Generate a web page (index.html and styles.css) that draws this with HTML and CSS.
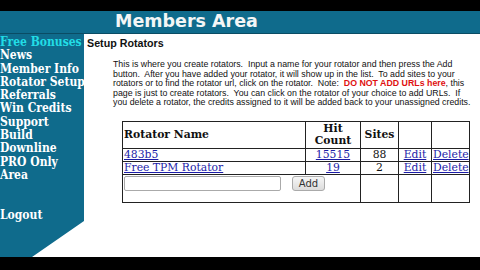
FILE: index.html
```html
<!DOCTYPE html>
<html>
	<head>
		<meta charset="utf-8">
		<title>Members Area</title>
		<link rel="stylesheet" href="styles.css">
	</head>
	<body>
		<div id="main">
			<div class="header">Members Area</div>
			<div class="wrap">
				<div class="menu">
					<a href="#" class="hot">Free Bonuses</a>
					<a href="#">News</a>
					<a href="#">Member Info</a>
					<a href="#">Rotator Setup</a>
					<a href="#">Referrals</a>
					<a href="#">Win Credits</a>
					<a href="#">Support</a>
					<a href="#">Build<br>Downline</a>
					<a href="#">PRO Only<br>Area</a>
					<a href="#" class="logout">Logout</a>
				</div>
				<div class="content">
					<h3>Setup Rotators</h3>
					<p class="intro">This is where you create rotators.&nbsp; Input a name for your rotator and then press the Add button.&nbsp; After you have added your rotator, it will show up in the list.&nbsp; To add sites to your rotators or to find the rotator url, click on the rotator.&nbsp; Note:&nbsp; <b class="warn">DO NOT ADD URLs here</b>, this page is just to create rotators.&nbsp; You can click on the rotator of your choice to add URLs.&nbsp; If you delete a rotator, the credits assigned to it will be added back to your unassigned credits.</p>
					<table class="rotators">
						<tr class="head">
							<th class="name">Rotator Name</th>
							<th class="hits">Hit<br>Count</th>
							<th class="sites">Sites</th>
							<th class="edit"></th>
							<th class="del"></th>
						</tr>
						<tr>
							<td><a href="#">483b5</a></td>
							<td class="c"><a href="#">15515</a></td>
							<td class="c">88</td>
							<td class="c"><a href="#">Edit</a></td>
							<td class="c"><a href="#">Delete</a></td>
						</tr>
						<tr>
							<td><a href="#">Free TPM Rotator</a></td>
							<td class="c"><a href="#">19</a></td>
							<td class="c">2</td>
							<td class="c"><a href="#">Edit</a></td>
							<td class="c"><a href="#">Delete</a></td>
						</tr>
						<tr class="addrow">
							<td colspan="2">
								<form class="addform">
									<input type="text" class="newname">
									<button type="button" class="addbtn">Add</button>
								</form>
							</td>
							<td></td>
							<td></td>
							<td></td>
						</tr>
					</table>
				</div>
			</div>
		</div>
	</body>
</html>
```

FILE: styles.css
```css
body {
	margin: 0;
	background: #000;
}

#main {
	margin-top: 11px;
	height: 246px;
	display: flex;
	flex-direction: column;
}

.header {
	height: 22px;
	line-height: 22px;
	background: #0f6b8c;
	border-bottom: 1px solid #0a4c64;
	color: #f4f6f6;
	font: bold 17.5px "DejaVu Sans", Verdana, sans-serif;
	padding-left: 115px;
}

.wrap {
	flex: 1;
	display: flex;
	background: #fff;
}

.menu {
	width: 84px;
	flex-shrink: 0;
	background: #0f6b8c;
	padding-top: 2px;
	clip-path: polygon(0 0, 90px 0, 90px 187px, 84px 187px, 32px 223px, 0 223px);
}

.menu a {
	display: block;
	white-space: nowrap;
	color: #fff;
	text-decoration: none;
	font: bold 12px/13.3px "DejaVu Serif Condensed", "DejaVu Serif", serif;
}

.menu a.hot {
	color: #22dde6;
}

.menu a.logout {
	margin-top: 26.6px;
}

.content {
	flex: 1;
	padding: 3px 8px 0 3px;
	font-family: "Liberation Sans", Arial, sans-serif;
	color: #111;
}

.content h3 {
	margin: 0;
	font-size: 10.7px;
	line-height: 12px;
}

.intro {
	margin: 11px 0 0 26px;
	font-size: 8.8px;
	line-height: 9.6px;
}

.warn {
	color: #e01010;
}

.rotators {
	margin: 13px 0 0 35px;
	width: 348px;
	table-layout: fixed;
	border-collapse: collapse;
	border: 1px solid #aaa;
	font: 10.8px "DejaVu Serif", serif;
}

.rotators th,
.rotators td {
	border: 1px solid #222;
	padding: 0 1px;
	line-height: 12px;
	white-space: nowrap;
}

.rotators th {
	height: 26px;
	vertical-align: middle;
}

.rotators .name {
	text-align: left;
	width: 180px;
}

.rotators .hits {
	width: 52px;
}

.rotators .sites {
	width: 35px;
}

.rotators .edit {
	width: 30px;
}

.rotators td.c {
	text-align: center;
}

.rotators a {
	color: #1c1ca8;
}

.addrow td {
	height: 27px;
	vertical-align: top;
}

.addform {
	margin: 1px 0 0 0;
	display: flex;
	align-items: flex-start;
	gap: 11px;
}

.newname {
	width: 157px;
	height: 15px;
	box-sizing: border-box;
	border: 1px solid #aaa;
	border-radius: 2px;
	margin: 0;
}

.addbtn {
	width: 33px;
	height: 15px;
	padding: 0;
	margin: 0;
	border: 1px solid #aaa;
	border-radius: 3px;
	background: linear-gradient(#f6f6f6, #dcdcdc);
	color: #333;
	font: 10px "DejaVu Sans", sans-serif;
}
```
